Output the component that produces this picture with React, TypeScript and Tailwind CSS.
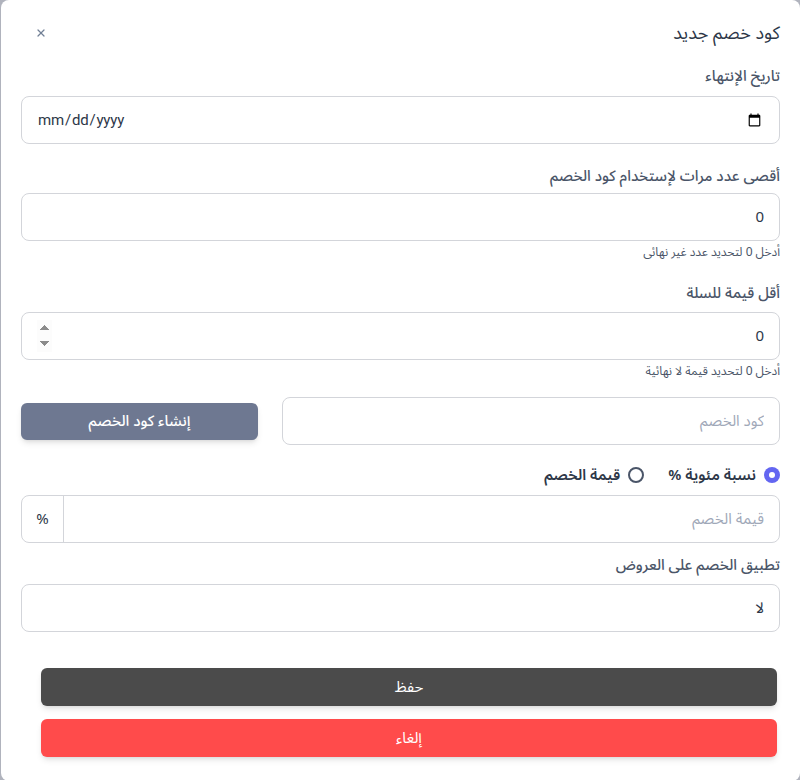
import { X } from 'lucide-react';

const font = { fontFamily: '"Noto Sans Arabic", "Noto Sans", "DejaVu Sans", sans-serif' };

function Label({ children, className = '' }: { children: React.ReactNode; className?: string }) {
    return <label className={`block text-[15px] leading-5 font-medium text-[#4a5568] ${className}`}>{children}</label>;
}

function Hint({ children }: { children: React.ReactNode }) {
    return <p className="mt-1 text-xs leading-4 text-[#4a5568]">{children}</p>;
}

const inputCls =
    'block w-full h-12 rounded-lg border border-[#d3d5da] bg-white px-[15px] text-[15px] text-[#2d3748] placeholder:text-[#a0a8b8] outline-none';

export default function App() {
    return (
        <div className="min-h-[780px] bg-[#b0b3bd] pl-[1px]" style={font}>
            <div dir="rtl" className="min-h-[780px] rounded-lg bg-white px-5 pt-[19px] pb-6">
                {/* Header */}
                <div className="flex items-center justify-between h-7">
                    <h2 className="text-lg leading-7 text-[#2d3748]">كود خصم جديد</h2>
                    <button className="ml-[14px] text-[#718096]">
                        <X className="h-3 w-3" strokeWidth={2.5} />
                    </button>
                </div>

                {/* Expiry date */}
                <Label className="mt-[19px]">تاريخ الإنتهاء</Label>
                <input
                    type="date"
                    dir="ltr"
                    className={`${inputCls} mt-[10px] font-['Roboto',sans-serif] tracking-[-0.2px]`}
                />

                {/* Max uses */}
                <Label className="mt-[22px]">أقصى عدد مرات لإستخدام كود الخصم</Label>
                <input type="text" defaultValue="0" className={`${inputCls} mt-[7px]`} />
                <Hint>أدخل 0 لتحديد عدد غير نهائى</Hint>

                {/* Min cart */}
                <Label className="mt-[22px]">أقل قيمة للسلة</Label>
                <input
                    type="number"
                    defaultValue={0}
                    className={`${inputCls} mt-[9px] [&::-webkit-inner-spin-button]:opacity-100`}
                />
                <Hint>أدخل 0 لتحديد قيمة لا نهائية</Hint>

                {/* Code + generate */}
                <div className="mt-[17px] flex items-center gap-6">
                    <input type="text" placeholder="كود الخصم" className={`${inputCls} flex-1`} />
                    <button className="h-[37px] w-[237px] shrink-0 rounded-md bg-[#6e7891] text-[15px] font-medium text-white shadow-md">
                        إنشاء كود الخصم
                    </button>
                </div>

                {/* Discount type */}
                <div className="mt-5 flex items-center h-5 gap-6 text-[15px] font-semibold text-[#2d3748]">
                    <label className="flex items-center gap-2">
                        <span className="flex h-4 w-4 items-center justify-center rounded-full bg-[#6366f1]">
                            <span className="h-[6px] w-[6px] rounded-full bg-white" />
                        </span>
                        نسبة مئوية %
                    </label>
                    <label className="flex items-center gap-2">
                        <span className="h-4 w-4 rounded-full border-2 border-[#4a5568] bg-white" />
                        قيمة الخصم
                    </label>
                </div>

                {/* Discount value */}
                <div className="mt-[10px] flex h-12 overflow-hidden rounded-lg border border-[#d3d5da]">
                    <input
                        type="text"
                        placeholder="قيمة الخصم"
                        className="flex-1 px-[15px] text-[15px] text-[#2d3748] placeholder:text-[#a0a8b8] outline-none"
                    />
                    <span className="flex w-[42px] items-center justify-center border-r border-[#d3d5da] text-[15px] text-[#2d3748]">
                        %
                    </span>
                </div>

                {/* Apply on offers */}
                <Label className="mt-3">تطبيق الخصم على العروض</Label>
                <div className={`${inputCls} mt-[9px] flex items-center`}>لا</div>

                {/* Actions */}
                <div className="mt-9 mr-[3px] ml-5 flex flex-col gap-[13px]">
                    <button className="h-[38px] w-full rounded-md bg-[#4b4b4b] text-[15px] text-white shadow-md">
                        حفظ
                    </button>
                    <button className="h-[38px] w-full rounded-md bg-[#ff4b4b] text-[15px] text-white shadow-md">
                        إلغاء
                    </button>
                </div>
            </div>
        </div>
    );
}
